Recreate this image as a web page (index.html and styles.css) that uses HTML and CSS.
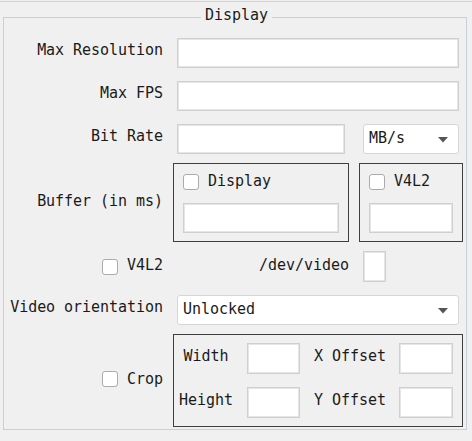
FILE: index.html
```html
<!DOCTYPE html>
<html>
<head>
<meta charset="utf-8">
<link rel="stylesheet" href="styles.css">
</head>
<body>
<div class="topline"></div>
<div class="group">
  <span class="group-title">Display</span>
  <div class="form">
    <div class="lbl">Max Resolution</div>
    <input class="edit" type="text">

    <div class="lbl">Max FPS</div>
    <input class="edit" type="text">

    <div class="lbl">Bit Rate</div>
    <div class="pair">
      <input class="edit grow" type="text">
      <div class="combo small-combo"><span class="combo-text">MB/s</span><svg class="arrow" width="10" height="6" viewBox="0 0 10 6"><path d="M0 0H10L5 5.5Z" fill="#555"/></svg></div>
    </div>

    <div class="lbl lbl-box">Buffer (in ms)</div>
    <div class="boxes">
      <div class="box box-display">
        <div class="check-row"><span class="check"></span><span>Display</span></div>
        <input class="edit" type="text">
      </div>
      <div class="box box-v4l2">
        <div class="check-row"><span class="check"></span><span>V4L2</span></div>
        <input class="edit" type="text">
      </div>
    </div>

    <div class="lbl-check"><span class="check"></span><span class="lbl-text">V4L2</span></div>
    <div class="dev-row"><span class="dev-text">/dev/video</span><input class="edit tiny" type="text"></div>

    <div class="lbl">Video orientation</div>
    <div class="combo"><span class="combo-text">Unlocked</span><svg class="arrow" width="10" height="6" viewBox="0 0 10 6"><path d="M0 0H10L5 5.5Z" fill="#555"/></svg></div>

    <div class="lbl-check lbl-crop"><span class="check"></span><span class="lbl-text">Crop</span></div>
    <div class="box crop-box">
      <div class="crop-lbl">Width</div>
      <input class="edit small-edit" type="text">
      <div class="crop-lbl">X Offset</div>
      <input class="edit small-edit" type="text">
      <div class="crop-lbl">Height</div>
      <input class="edit small-edit" type="text">
      <div class="crop-lbl">Y Offset</div>
      <input class="edit small-edit" type="text">
    </div>
  </div>
</div>
</body>
</html>
```
FILE: styles.css
```css
html, body {
  margin: 0;
  padding: 0;
  background: #f0f0f0;
}
body {
  width: 472px;
  height: 441px;
  overflow: hidden;
  font-family: "DejaVu Sans Mono", monospace;
  font-size: 15px;
  letter-spacing: -0.04px;
  color: #1a1a1a;
}
.topline {
  margin-top: 1px;
  height: 1px;
  background: #c9d3de;
}
.group {
  position: relative;
  margin: 15px 0 0 3px;
  width: 464px;
  box-sizing: border-box;
  border: 1px solid #c5d0dc;
}
.group-title {
  position: absolute;
  top: -11px;
  left: 197px;
  padding: 0 4px;
  background: #f0f0f0;
  line-height: 17px;
}
.form {
  display: grid;
  grid-template-columns: 159px minmax(0, 1fr);
  column-gap: 14px;
  row-gap: 13px;
  padding: 20px 7px 6px 0;
}
.lbl {
  align-self: center;
  text-align: right;
  white-space: nowrap;
  margin-bottom: 6px;
}
.lbl-box {
  margin-bottom: 3px;
}
.edit {
  display: block;
  box-sizing: border-box;
  height: 30px;
  width: 100%;
  min-width: 0;
  margin: 0;
  padding: 0 5px;
  background: #fff;
  border: 1px solid #cfcfcf;
  box-shadow: inset 0 0 0 1px #e6e6e6;
  font: inherit;
  outline: none;
}
.pair {
  display: flex;
  gap: 18px;
  min-width: 0;
}
.grow {
  flex: 1;
  width: auto;
}
.combo {
  box-sizing: border-box;
  height: 30px;
  display: flex;
  align-items: center;
  justify-content: space-between;
  padding: 0 10px 0 5px;
  background: #fff;
  border: 1px solid #d6d6d6;
  border-radius: 3px;
  min-width: 0;
}
.small-combo {
  width: 96px;
  flex: none;
}
.combo-text {
  margin-bottom: 2px;
}
.arrow {
  display: block;
  margin-top: 1px;
}
.boxes {
  display: flex;
  gap: 10px;
  margin: -4px -4px;
  min-width: 0;
}
.box {
  box-sizing: border-box;
  border: 1px solid #3f3f3f;
  min-width: 0;
}
.box-display {
  width: 176px;
  flex: none;
  padding: 10px 9px 8px 9px;
}
.box-v4l2 {
  flex: 1;
  padding: 10px 9px 8px 9px;
}
.check-row {
  display: flex;
  align-items: center;
  gap: 9px;
  height: 16px;
  margin-bottom: 13px;
  white-space: nowrap;
}
.check-row span:last-child {
  margin-bottom: 2px;
}
.check {
  display: inline-block;
  box-sizing: border-box;
  width: 16px;
  height: 16px;
  flex: none;
  background: #fff;
  border: 1px solid #ababab;
  border-radius: 3px;
}
.lbl-check {
  display: flex;
  align-items: center;
  justify-content: flex-end;
  gap: 9px;
  white-space: nowrap;
}
.lbl-text {
  margin-bottom: 4px;
}
.lbl-crop .check {
  margin-top: -3px;
}
.dev-row {
  display: flex;
  align-items: center;
  padding-left: 82px;
  gap: 14px;
}
.dev-text {
  margin-bottom: 4px;
}
.tiny {
  width: 23px;
  height: 31px;
  flex: none;
}
.crop-box {
  margin: -4px -4px;
  display: grid;
  grid-template-columns: 54px 53px 71px minmax(0, 1fr);
  column-gap: 14px;
  row-gap: 13px;
  padding: 8px 9px 8px 5px;
  align-items: center;
}
.crop-lbl {
  text-align: center;
  white-space: nowrap;
  margin-bottom: 6px;
}
.small-edit {
  height: 31px;
}
```
